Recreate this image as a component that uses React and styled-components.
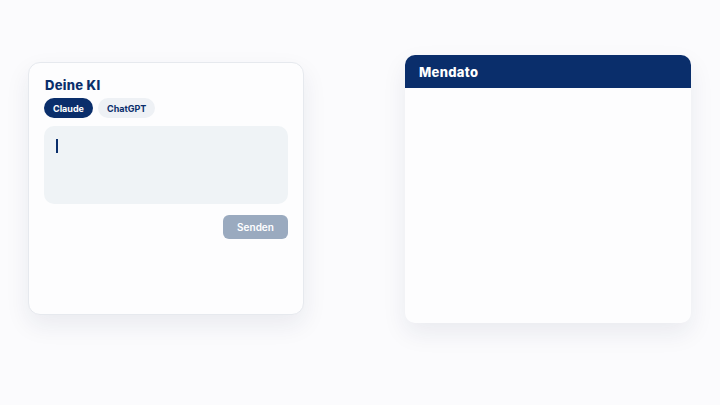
import React, { useState } from 'react';
import styled, { createGlobalStyle } from 'styled-components';

const navy = '#0a2e6b';

const GlobalStyle = createGlobalStyle`
	html, body {
		margin: 0;
		padding: 0;
		background: #fbfbfd;
		font-family: Inter, 'Noto Sans', sans-serif;
	}
	* { box-sizing: border-box; }
`;

const Page = styled.main`
	display: flex;
	align-items: flex-start;
	justify-content: space-between;
	padding: 55px 29px 55px 28px;
	width: 720px;
	height: 405px;
`;

const Card = styled.section`
	background: #fdfdfe;
	border: 1px solid #e6e9ee;
	border-radius: 12px;
	box-shadow: 0 10px 24px rgba(20, 40, 80, 0.08);
	overflow: hidden;
`;

const ChatCard = styled(Card)`
	width: 276px;
	height: 253px;
	margin-top: 7px;
	padding: 13px 15px 15px 15px;
`;

const Title = styled.h2`
	margin: 0 0 4px 1px;
	font-size: 13px;
	font-weight: 800;
	color: ${navy};
	line-height: 18px;
	letter-spacing: 0.3px;
`;

const Tabs = styled.div`
	display: flex;
	gap: 5px;
	margin-bottom: 8px;
`;

const Tab = styled.button`
	border: 0;
	height: 20px;
	padding: 0 9px;
	border-radius: 10px;
	font-family: inherit;
	font-size: 9px;
	font-weight: 700;
	background: ${(p) => (p.active ? navy : '#eef1f5')};
	color: ${(p) => (p.active ? '#fff' : navy)};
	cursor: pointer;
`;

const Input = styled.div`
	height: 78px;
	border-radius: 10px;
	background: #eff3f6;
	padding: 13px 12px;
`;

const Caret = styled.span`
	display: block;
	width: 2px;
	height: 14px;
	background: ${navy};
`;

const Actions = styled.div`
	display: flex;
	justify-content: flex-end;
	margin-top: 11px;
`;

const SendButton = styled.button`
	border: 0;
	width: 65px;
	height: 24px;
	border-radius: 6px;
	background: #9aaabf;
	color: #fff;
	font-family: inherit;
	font-size: 10px;
	font-weight: 600;
`;

const ResultCard = styled(Card)`
	width: 286px;
	height: 268px;
	border: 0;
	border-radius: 10px;
`;

const Header = styled.header`
	height: 33px;
	background: ${navy};
	color: #fff;
	display: flex;
	align-items: center;
	padding: 0 14px;
	font-size: 13px;
	font-weight: 800;
	letter-spacing: 0.3px;
`;

const models = ['Claude', 'ChatGPT'];

export default function App() {
	const [model, setModel] = useState('Claude');

	return (
		<>
			<GlobalStyle />
			<Page>
				<ChatCard>
					<Title>Deine KI</Title>
					<Tabs>
						{models.map((m) => (
							<Tab key={m} active={m === model} onClick={() => setModel(m)}>
								{m}
							</Tab>
						))}
					</Tabs>
					<Input>
						<Caret />
					</Input>
					<Actions>
						<SendButton>Senden</SendButton>
					</Actions>
				</ChatCard>
				<ResultCard>
					<Header>Mendato</Header>
				</ResultCard>
			</Page>
		</>
	);
}
